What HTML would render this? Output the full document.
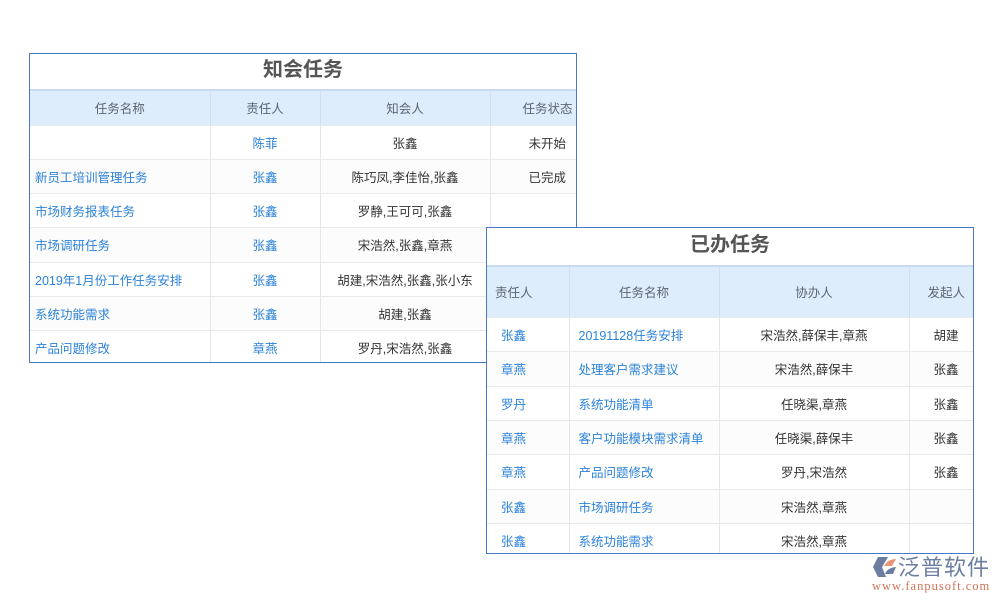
<!DOCTYPE html>
<html><head><meta charset="utf-8"><style>
body{margin:0;width:1000px;height:600px;background:#fff;position:relative;overflow:hidden;font-family:"Liberation Sans","Noto Sans CJK SC",sans-serif;}
.box{position:absolute;border:1px solid #4a78c8;background:#fff;overflow:hidden;box-sizing:border-box;}
.ttl{text-align:center;font-weight:bold;color:#555;font-size:20px;border-bottom:2px solid #c9dcef;box-sizing:border-box;}
table{border-collapse:collapse;table-layout:fixed;font-size:12.5px;}
td{border-right:1px solid #e6e6e6;border-bottom:1px solid #e9e9e9;text-align:center;color:#333;padding:0;white-space:nowrap;overflow:visible;}
tr.h td{background:#deedfb;color:#5a6673;border-right-color:#cfe0f0;}
tr:nth-child(odd):not(.h) td{background:#fcfcfc;}
td.l{text-align:left;padding-left:5px;}
.b{color:#2b82d9;}
</style></head><body>

<div class="box" style="left:29px;top:53px;width:548px;height:310px;">
<div class="ttl" style="height:37px;line-height:32px;">知会任务</div>
<table style="width:560px">
<colgroup><col style="width:180px"><col style="width:110px"><col style="width:170px"><col style="width:100px"></colgroup>
<tr class="h" style="height:34px"><td>任务名称</td><td>责任人</td><td>知会人</td><td style="text-align:left;padding-left:32px">任务状态</td></tr>
<tr style="height:34px"><td class="l b"></td><td class="b">陈菲</td><td>张鑫</td><td style="text-align:left;padding-left:38px">未开始</td></tr>
<tr style="height:34px"><td class="l b">新员工培训管理任务</td><td class="b">张鑫</td><td>陈巧凤,李佳怡,张鑫</td><td style="text-align:left;padding-left:38px">已完成</td></tr>
<tr style="height:34px"><td class="l b">市场财务报表任务</td><td class="b">张鑫</td><td>罗静,王可可,张鑫</td><td></td></tr>
<tr style="height:35px"><td class="l b">市场调研任务</td><td class="b">张鑫</td><td>宋浩然,张鑫,章燕</td><td></td></tr>
<tr style="height:34px"><td class="l b">2019年1月份工作任务安排</td><td class="b">张鑫</td><td>胡建,宋浩然,张鑫,张小东</td><td></td></tr>
<tr style="height:34px"><td class="l b">系统功能需求</td><td class="b">张鑫</td><td>胡建,张鑫</td><td></td></tr>
<tr style="height:34px"><td class="l b">产品问题修改</td><td class="b">章燕</td><td>罗丹,宋浩然,张鑫</td><td></td></tr>
</table></div>

<div class="box" style="left:486px;top:227px;width:488px;height:327px;">
<div class="ttl" style="height:39px;line-height:34px;">已办任务</div>
<table style="width:500px">
<colgroup><col style="width:82px"><col style="width:150px"><col style="width:190px"><col style="width:78px"></colgroup>
<tr class="h" style="height:50px"><td class="l" style="padding-left:8px">责任人</td><td>任务名称</td><td>协办人</td><td style="text-align:left;padding-left:18px">发起人</td></tr>
<tr style="height:34px"><td class="l b" style="padding-left:14px">张鑫</td><td class="l b" style="padding-left:9px">20191128任务安排</td><td>宋浩然,薛保丰,章燕</td><td style="text-align:left;padding-left:24px">胡建</td></tr>
<tr style="height:35px"><td class="l b" style="padding-left:14px">章燕</td><td class="l b" style="padding-left:9px">处理客户需求建议</td><td>宋浩然,薛保丰</td><td style="text-align:left;padding-left:24px">张鑫</td></tr>
<tr style="height:34px"><td class="l b" style="padding-left:14px">罗丹</td><td class="l b" style="padding-left:9px">系统功能清单</td><td>任晓渠,章燕</td><td style="text-align:left;padding-left:24px">张鑫</td></tr>
<tr style="height:34px"><td class="l b" style="padding-left:14px">章燕</td><td class="l b" style="padding-left:9px">客户功能模块需求清单</td><td>任晓渠,薛保丰</td><td style="text-align:left;padding-left:24px">张鑫</td></tr>
<tr style="height:35px"><td class="l b" style="padding-left:14px">章燕</td><td class="l b" style="padding-left:9px">产品问题修改</td><td>罗丹,宋浩然</td><td style="text-align:left;padding-left:24px">张鑫</td></tr>
<tr style="height:34px"><td class="l b" style="padding-left:14px">张鑫</td><td class="l b" style="padding-left:9px">市场调研任务</td><td>宋浩然,章燕</td><td></td></tr>
<tr style="height:34px"><td class="l b" style="padding-left:14px">张鑫</td><td class="l b" style="padding-left:9px">系统功能需求</td><td>宋浩然,章燕</td><td></td></tr>
</table></div>

<svg style="position:absolute;left:872px;top:554px" width="26" height="26" viewBox="0 0 26 26">
<polygon points="6,3 16,3 10,13 14,23 6,23 1,13" fill="#6b7da0"/>
<path d="M12,12 Q16,5 24,5 L20,12 Z" fill="#e8957a"/>
<path d="M13,20 Q15,14 24,13 L21,20 Z" fill="#6b7da0"/>
</svg>
<div style="position:absolute;left:898px;top:550px;font-size:22px;color:#6b7da0;letter-spacing:1px;">泛普软件</div>
<div style="position:absolute;left:872px;top:579px;font-size:12.5px;color:#d0735a;font-family:'Liberation Serif',serif;letter-spacing:1px;">www.fanpusoft.com</div>
</body></html>
